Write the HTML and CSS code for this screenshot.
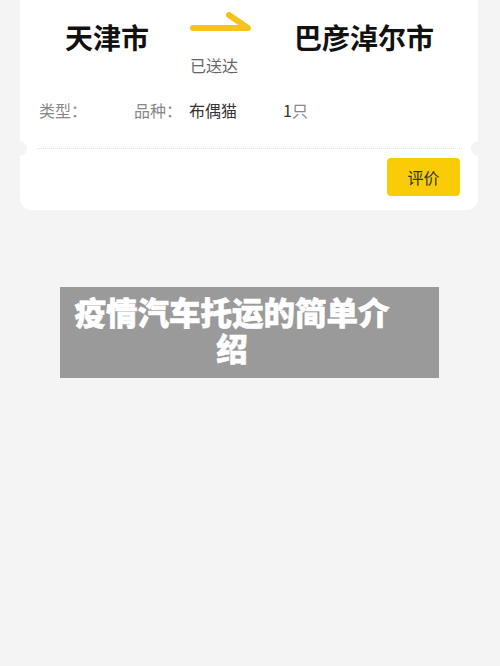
FILE: index.html
```html
<!DOCTYPE html>
<html lang="zh-CN">
<head>
<meta charset="utf-8">
<link rel="stylesheet" href="styles.css">
</head>
<body>
<div class="card">
  <div class="route">
    <div class="city">天津市</div>
    <div class="status">
      <svg class="arrow" width="62" height="22" viewBox="0 0 62 22">
        <path d="M3 17 H58 L39 4" fill="none" stroke="#f7c21c" stroke-width="6" stroke-linecap="round" stroke-linejoin="round"/>
      </svg>
      <div class="status-text">已送达</div>
    </div>
    <div class="city">巴彦淖尔市</div>
  </div>
  <div class="info">
    <span class="label type">类型：</span>
    <span class="label">品种：</span>
    <span class="value breed">布偶猫</span>
    <span class="count"><span class="value">1</span><span class="label">只</span></span>
  </div>
  <div class="divider">
    <span class="notch left"></span>
    <span class="notch right"></span>
  </div>
  <div class="actions">
    <button class="btn">评价</button>
  </div>
</div>
<div class="banner">疫情汽车托运的简单介绍</div>
</body>
</html>
```
FILE: styles.css
```css
* { box-sizing: border-box; }
html, body { margin: 0; padding: 0; }
body {
  background: #f4f4f4;
  width: 500px;
  height: 666px;
  font-family: "Noto Sans CJK SC", "Noto Sans", sans-serif;
  overflow: hidden;
}
.card {
  margin: 0 22px 0 20px;
  background: #fff;
  border-radius: 0 0 12px 12px;
  padding-top: 21px;
}
.route {
  display: flex;
  align-items: flex-start;
  padding-left: 45px;
}
.city {
  font-size: 28px;
  line-height: 32px;
  font-weight: 700;
  color: #111;
}
.status {
  width: 62px;
  margin: -10px 42px 0 41px;
  display: flex;
  flex-direction: column;
}
.arrow { display: block; }
.status-text {
  margin-top: 23px;
  font-size: 16px;
  line-height: 18px;
  color: #666;
}
.info {
  display: flex;
  align-items: center;
  padding: 26px 0 0 19px;
  font-size: 16px;
  line-height: 20px;
}
.label { color: #888; }
.value { color: #333; }
.type { width: 95px; }
.breed { margin-left: 7px; }
.count { margin-left: 46px; }
.divider {
  position: relative;
  margin: 28px 16px 0 17px;
  border-top: 1px dotted #e2e2e2;
}
.notch {
  position: absolute;
  top: -8px;
  width: 15px;
  height: 15px;
  border-radius: 50%;
  background: #f4f4f4;
}
.notch.left { left: -25px; }
.notch.right { right: -24px; }
.actions {
  display: flex;
  justify-content: flex-end;
  padding: 9px 18px 14px 0;
}
.btn {
  width: 73px;
  height: 38px;
  border: 0;
  border-radius: 4px;
  background: #f9cc05;
  color: #333;
  font-family: "Noto Sans CJK SC", sans-serif;
  font-size: 16px;
}
.banner {
  margin: 77px 61px 0 60px;
  height: 91px;
  background: #9a9a9a;
  color: #fff;
  font-size: 31.5px;
  line-height: 36px;
  font-weight: 900;
  -webkit-text-stroke: 0.6px #fff;
  text-align: center;
  padding: 6px 49px 0 14px;
}
```
